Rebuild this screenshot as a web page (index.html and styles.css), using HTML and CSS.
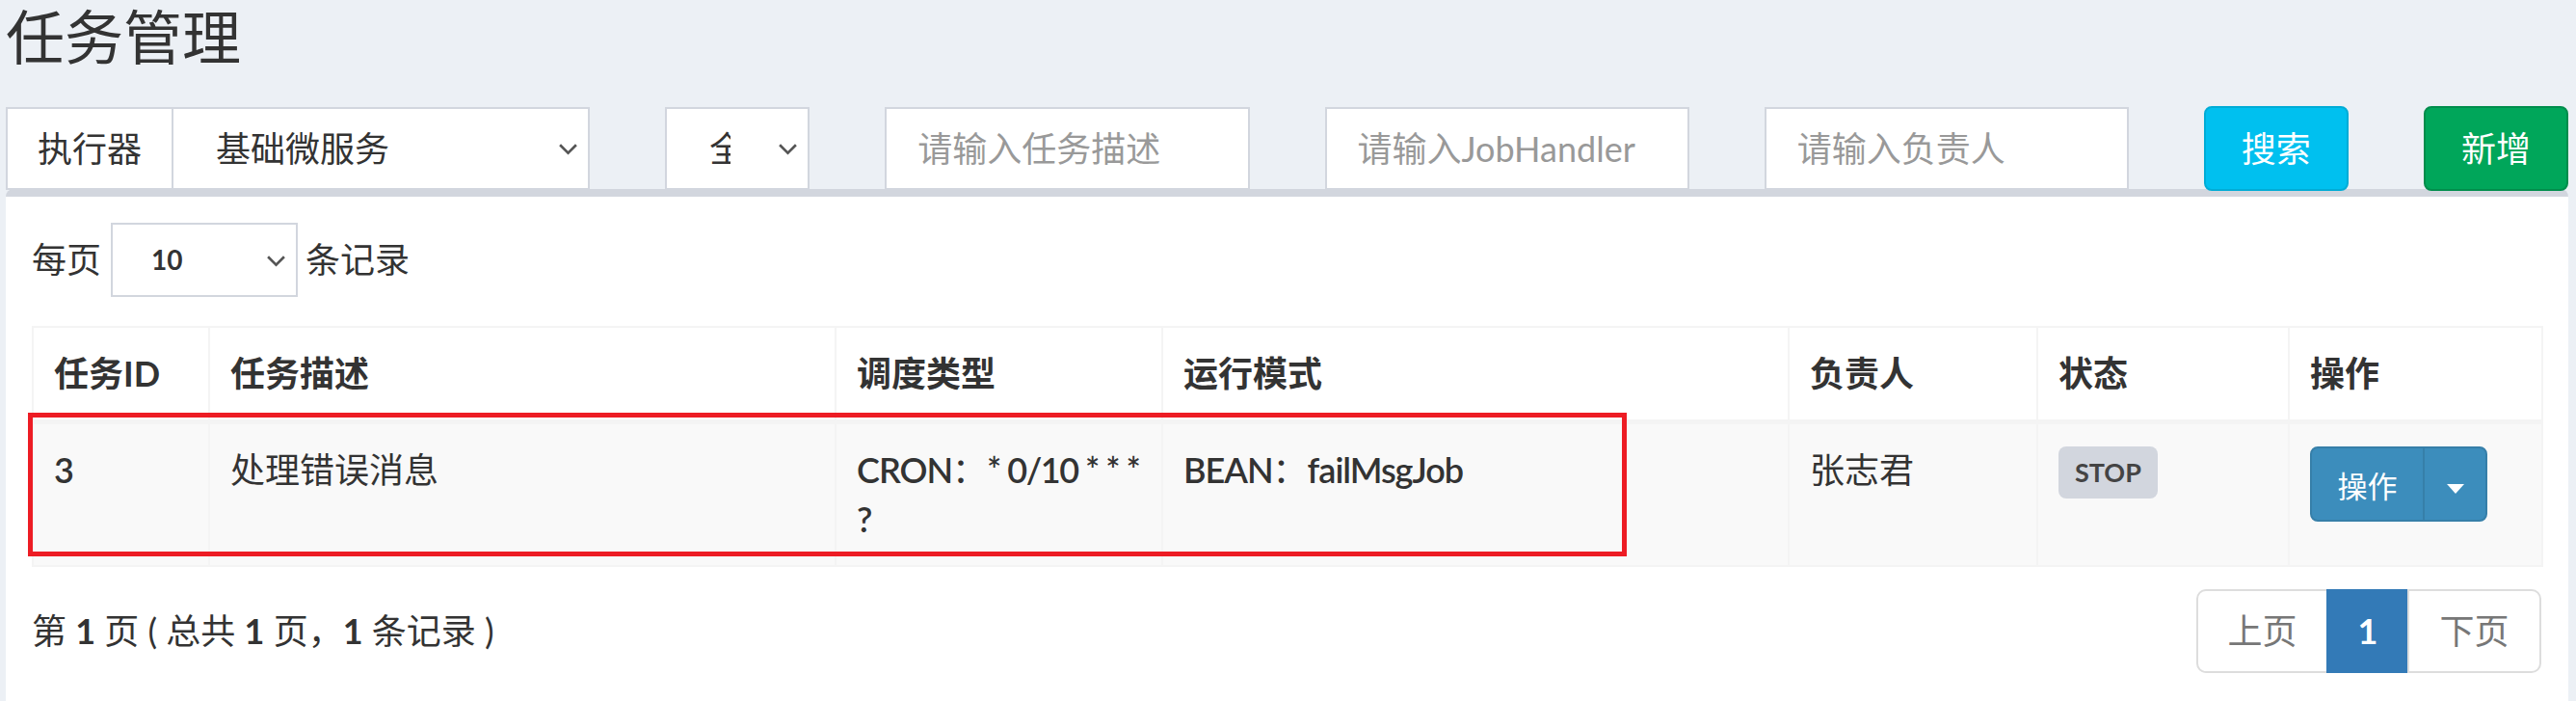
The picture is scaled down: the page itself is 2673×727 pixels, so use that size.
FILE: index.html
```html
<!DOCTYPE html>
<html lang="zh-CN">
<head>
  <meta charset="UTF-8" />
  <meta name="viewport" content="width=device-width, initial-scale=1.0"/>
  <title>任务管理</title>
  <link rel="stylesheet" href="styles.css">
</head>
<body>
  <div class="content">
    <h1 class="page-title">任务管理</h1>

    <div class="filter-row">
      <div class="input-group span-3">
        <span class="addon">执行器</span>
        <div class="select-wrap">
          <select class="form-control select">
            <option>基础微服务</option>
          </select>
          <svg class="chevron" viewBox="0 0 20 12"><polyline points="2,2 10,10 18,2"/></svg>
        </div>
      </div>
      <div class="select-wrap">
        <select class="form-control select">
          <option>全部</option>
          <option>启动</option>
          <option>停止</option>
        </select>
        <svg class="chevron" viewBox="0 0 20 12"><polyline points="2,2 10,10 18,2"/></svg>
      </div>
      <input class="form-control span-2" type="text" placeholder="请输入任务描述">
      <input class="form-control span-2" type="text" placeholder="请输入JobHandler">
      <input class="form-control span-2" type="text" placeholder="请输入负责人">
      <button class="btn btn-info">搜索</button>
      <button class="btn btn-success">新增</button>
    </div>

    <div class="box">
      <div class="length-row">
        <span>每页</span>
        <div class="select-wrap page-size">
          <select class="form-control select">
            <option>10</option>
            <option>25</option>
            <option>50</option>
          </select>
          <svg class="chevron" viewBox="0 0 20 12"><polyline points="2,2 10,10 18,2"/></svg>
        </div>
        <span>条记录</span>
      </div>

      <div class="table-wrap">
        <table class="job-table">
          <colgroup>
            <col class="c-id">
            <col class="c-desc">
            <col class="c-type">
            <col class="c-mode">
            <col class="c-author">
            <col class="c-status">
            <col class="c-op">
          </colgroup>
          <thead>
            <tr>
              <th>任务ID</th>
              <th>任务描述</th>
              <th>调度类型</th>
              <th>运行模式</th>
              <th>负责人</th>
              <th>状态</th>
              <th>操作</th>
            </tr>
          </thead>
          <tbody>
            <tr>
              <td><span class="en">3</span></td>
              <td>处理错误消息</td>
              <td><span class="en">CRON</span>：<span class="en cron">* 0/10 * * * ?</span></td>
              <td><span class="en">BEAN</span>：<span class="en">failMsgJob</span></td>
              <td>张志君</td>
              <td><span class="label">STOP</span></td>
              <td>
                <div class="btn-group">
                  <button class="btn-op">操作</button>
                  <button class="btn-op toggle"><span class="caret"></span></button>
                </div>
              </td>
            </tr>
          </tbody>
        </table>
        <div class="mark"></div>
      </div>

      <div class="table-footer">
        <div class="info">第 <b>1</b> 页 ( 总共 <b>1</b> 页，<b>1</b> 条记录 )</div>
        <ul class="pagination">
          <li class="disabled"><a>上页</a></li>
          <li class="active"><a>1</a></li>
          <li class="disabled"><a>下页</a></li>
        </ul>
      </div>
    </div>
  </div>
</body>
</html>
```

FILE: styles.css
```css
* {
  box-sizing: border-box;
}

body {
  margin: 0;
  background: #ecf0f5;
  color: #333;
  font-family: Lato, "Noto Sans CJK SC", sans-serif;
  font-size: 36px;
  line-height: 51px;
}

.content {
  padding: 4px 8px 0 6px;
}

.page-title {
  margin: 0 0 42px 0;
  font-family: "Noto Sans CJK SC", sans-serif;
  font-size: 61px;
  line-height: 64px;
  font-weight: 400;
  color: #333;
}

/* filter bar */
.filter-row {
  display: grid;
  grid-template-columns: repeat(12, 1fr);
  column-gap: 78px;
  align-items: center;
  height: 86px;
}

.span-3 { grid-column: span 3; }
.span-2 { grid-column: span 2; }

.form-control {
  display: block;
  width: 100%;
  height: 86px;
  margin: 0;
  padding: 0 32px;
  border: 2px solid #d2d6de;
  border-radius: 0;
  background: #fff;
  color: #333;
  font: inherit;
  outline: none;
}

.form-control::placeholder {
  color: #999;
}

.input-group {
  display: flex;
}

.addon {
  display: flex;
  align-items: center;
  height: 86px;
  padding: 0 31px;
  border: 2px solid #d2d6de;
  border-right: none;
  background: #fff;
}

.select-wrap {
  position: relative;
  flex: 1;
}

.select {
  appearance: none;
  -webkit-appearance: none;
  padding: 0 80px 0 44px;
}

.chevron {
  position: absolute;
  right: 12px;
  top: 50%;
  width: 21px;
  height: 13px;
  margin-top: -6px;
  fill: none;
  stroke: #555;
  stroke-width: 2.5;
  pointer-events: none;
}

.btn {
  height: 88px;
  width: 100%;
  border: 2px solid transparent;
  border-radius: 8px;
  color: #fff;
  font: inherit;
}

.btn-info {
  background: #00c0ef;
  border-color: #00acd6;
}

.btn-success {
  background: #00a65a;
  border-color: #008d4c;
}

/* box */
.box {
  background: #fff;
  border-top: 8px solid #d2d6de;
  border-radius: 8px;
  padding: 27px 28px 40px 27px;
}

.length-row {
  display: flex;
  align-items: center;
  height: 77px;
}

.page-size {
  flex: none;
  width: 194px;
  margin: 0 8px 0 10px;
}

.page-size .select {
  height: 77px;
  padding: 0 40px;
  font-size: 28px;
  font-weight: 700;
}

.table-wrap {
  position: relative;
  margin-top: 30px;
}

.job-table {
  width: 100%;
  border-collapse: collapse;
  table-layout: fixed;
  border: 2px solid #f4f4f4;
}

.c-id { width: 183px; }
.c-desc { width: 650px; }
.c-type { width: 339px; }
.c-mode { width: 650px; }
.c-author { width: 258px; }
.c-status { width: 261px; }
.c-op { width: 263px; }

.job-table th,
.job-table td {
  border: 2px solid #f4f4f4;
  padding: 22px 21px;
  text-align: left;
  vertical-align: top;
}

.job-table th {
  border-bottom-width: 5px;
  font-weight: 700;
}

.job-table tbody tr {
  background: #f9f9f9;
}

.en {
  font-weight: 600;
  letter-spacing: -1px;
}

.cron {
  letter-spacing: -1.5px;
}

.label {
  display: inline-block;
  vertical-align: top;
  margin-top: 1px;
  padding: 0 17px;
  line-height: 54px;
  border-radius: 8px;
  background: #d2d6de;
  color: #444;
  font-size: 27px;
  font-weight: 700;
}

.btn-group {
  display: inline-flex;
  vertical-align: top;
  margin-top: 1px;
}

.btn-op {
  height: 78px;
  width: 119px;
  border: 2px solid #367fa9;
  border-radius: 8px 0 0 8px;
  background: #3c8dbc;
  color: #fff;
  font-family: "Noto Sans CJK SC", sans-serif;
  font-size: 31px;
}

.btn-op.toggle {
  width: 67px;
  margin-left: -2px;
  border-radius: 0 8px 8px 0;
}

.caret {
  display: inline-block;
  vertical-align: middle;
  border-left: 9px solid transparent;
  border-right: 9px solid transparent;
  border-top: 10px solid #fff;
}

/* the red annotation frame */
.mark {
  position: absolute;
  left: -4px;
  top: 90px;
  width: 1659px;
  height: 149px;
  border: 5px solid #ed1c24;
  pointer-events: none;
}

.table-footer {
  display: flex;
  justify-content: space-between;
  align-items: center;
  margin-top: 23px;
}

.info b {
  font-weight: 700;
}

.pagination {
  display: flex;
  margin: 0;
  padding: 0;
  list-style: none;
}

.pagination a {
  display: flex;
  align-items: center;
  justify-content: center;
  height: 87px;
  padding: 0 20px;
  margin-left: -2px;
  border: 2px solid #ddd;
  color: #777;
  background: #fff;
}

.pagination li:first-child a {
  width: 137px;
  margin-left: 0;
  border-radius: 10px 0 0 10px;
}

.pagination li:last-child a {
  width: 139px;
  border-radius: 0 10px 10px 0;
}

.pagination .active a {
  width: 86px;
  background: #337ab7;
  border-color: #337ab7;
  color: #fff;
  font-weight: 700;
}
```
